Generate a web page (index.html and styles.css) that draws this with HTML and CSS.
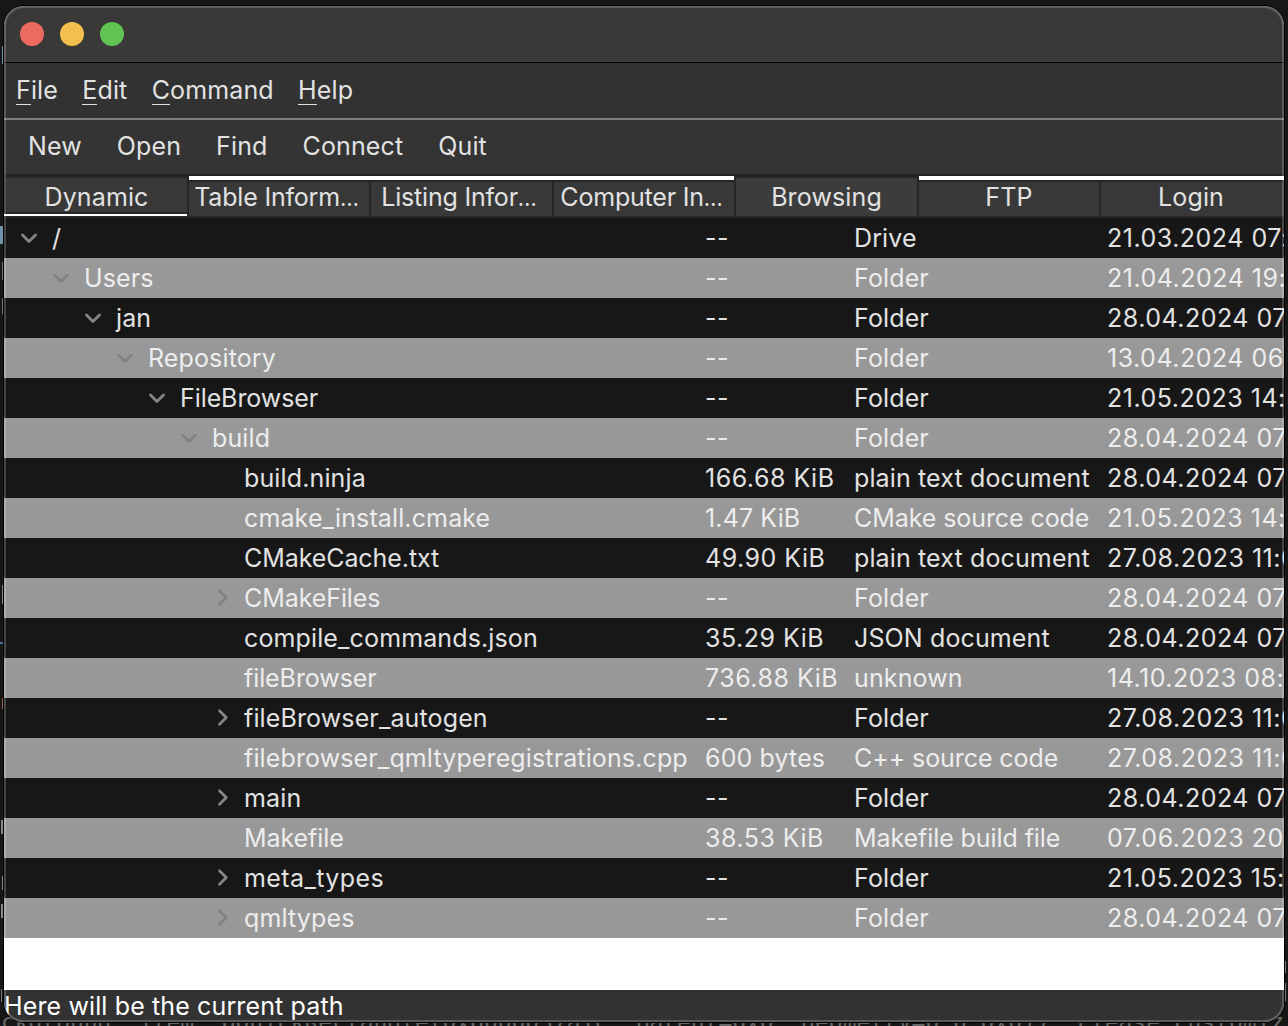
FILE: index.html
```
<!DOCTYPE html>
<html lang="en">
<head>
<meta charset="utf-8">
<title>File Browser</title>
<link rel="stylesheet" href="styles.css">
</head>
<body>
<svg class="symbols" width="0" height="0">
  <symbol id="down" viewBox="0 0 20 20"><path d="M3.5 7 10 13.4 16.5 7"/></symbol>
  <symbol id="right" viewBox="0 0 20 20"><path d="M8.5 2.8 15.3 9.5 8.5 16.2"/></symbol>
</svg>
<pre class="terminal">ckground' item: QQuickRectangle(0x6000037a1c, parent=0x0, geometry=0,0 0x0)). Please customiz</pre>
<main class="window">
  <header class="titlebar"><i class="light close"></i><i class="light minimize"></i><i class="light maximize"></i></header>
  <nav class="menubar"><span><u>F</u>ile</span><span><u>E</u>dit</span><span><u>C</u>ommand</span><span><u>H</u>elp</span></nav>
  <nav class="toolbar"><span>New</span><span>Open</span><span>Find</span><span>Connect</span><span>Quit</span></nav>
  <div class="tabs">
    <div class="tab current">Dynamic</div>
    <div class="tab lined elided">Table Inform<small>…</small></div>
    <div class="tab lined elided">Listing Infor<small>…</small></div>
    <div class="tab lined elided">Computer In<small>…</small></div>
    <div class="tab open">Browsing</div>
    <div class="tab lined">FTP</div>
    <div class="tab lined last">Login</div>
  </div>
  <section class="tree">
    <div class="row"><div class="name d0"><svg><use href="#down"/></svg>/</div><div class="num">--</div><div>Drive</div><div class="num">21.03.2024 07:12</div></div>
    <div class="row"><div class="name d1"><svg><use href="#down"/></svg>Users</div><div class="num">--</div><div>Folder</div><div class="num">21.04.2024 19:12</div></div>
    <div class="row"><div class="name d2"><svg><use href="#down"/></svg>jan</div><div class="num">--</div><div>Folder</div><div class="num">28.04.2024 07:12</div></div>
    <div class="row"><div class="name d3"><svg><use href="#down"/></svg>Repository</div><div class="num">--</div><div>Folder</div><div class="num">13.04.2024 06:12</div></div>
    <div class="row"><div class="name d4 tight"><svg><use href="#down"/></svg>FileBrowser</div><div class="num">--</div><div>Folder</div><div class="num">21.05.2023 14:12</div></div>
    <div class="row"><div class="name d5"><svg><use href="#down"/></svg>build</div><div class="num">--</div><div>Folder</div><div class="num">28.04.2024 07:12</div></div>
    <div class="row"><div class="name d6"><svg></svg>build.ninja</div><div class="num">166.68 KiB</div><div>plain text document</div><div class="num">28.04.2024 07:12</div></div>
    <div class="row"><div class="name d6"><svg></svg>cmake_install.cmake</div><div>1.47 KiB</div><div class="tight">CMake source code</div><div class="num">21.05.2023 14:12</div></div>
    <div class="row"><div class="name d6 tight"><svg></svg>CMakeCache.txt</div><div class="num">49.90 KiB</div><div>plain text document</div><div class="num">27.08.2023 11:02</div></div>
    <div class="row"><div class="name d6 tight"><svg><use href="#right"/></svg>CMakeFiles</div><div class="num">--</div><div>Folder</div><div class="num">28.04.2024 07:12</div></div>
    <div class="row"><div class="name d6"><svg></svg>compile_commands.json</div><div class="num">35.29 KiB</div><div>JSON document</div><div class="num">28.04.2024 07:12</div></div>
    <div class="row"><div class="name d6 tight"><svg></svg>fileBrowser</div><div class="num">736.88 KiB</div><div>unknown</div><div class="num">14.10.2023 08:12</div></div>
    <div class="row"><div class="name d6"><svg><use href="#right"/></svg>fileBrowser_autogen</div><div class="num">--</div><div>Folder</div><div class="num">27.08.2023 11:02</div></div>
    <div class="row"><div class="name d6"><svg></svg>filebrowser_qmltyperegistrations.cpp</div><div>600 bytes</div><div class="tight">C++ source code</div><div class="num">27.08.2023 11:02</div></div>
    <div class="row"><div class="name d6"><svg><use href="#right"/></svg>main</div><div class="num">--</div><div>Folder</div><div class="num">28.04.2024 07:12</div></div>
    <div class="row"><div class="name d6 tight"><svg></svg>Makefile</div><div class="num">38.53 KiB</div><div class="tight">Makefile build file</div><div class="num">07.06.2023 20:12</div></div>
    <div class="row"><div class="name d6 loose"><svg><use href="#right"/></svg>meta_types</div><div class="num">--</div><div>Folder</div><div class="num">21.05.2023 15:12</div></div>
    <div class="row"><div class="name d6"><svg><use href="#right"/></svg>qmltypes</div><div class="num">--</div><div>Folder</div><div class="num">28.04.2024 07:12</div></div>
  </section>
  <footer class="status">Here will be the current path</footer>
</main>
</body>
</html>
```
FILE: styles.css
```
* { box-sizing: border-box; }
body {
  margin: 0;
  height: 1026px;
  padding: 6px 4px 4px;
  overflow: hidden;
  /* slivers of the editor behind the window */
  background:
    linear-gradient(#6f93ab, #6f93ab) 2px 46px / 1px 18px no-repeat,
    linear-gradient(#6f93ab, #6f93ab) 0 226px / 3px 18px no-repeat,
    linear-gradient(#777, #777) 2px 262px / 1px 18px no-repeat,
    linear-gradient(#777, #777) 2px 298px / 1px 16px no-repeat,
    linear-gradient(#888, #888) 2px 585px / 1px 19px no-repeat,
    linear-gradient(#4a72a4, #4a72a4) 0 642px / 3px 2px no-repeat,
    linear-gradient(#9a6450, #9a6450) 2px 698px / 1px 11px no-repeat,
    linear-gradient(#888, #888) 1px 820px / 2px 14px no-repeat,
    linear-gradient(#888, #888) 2px 876px / 1px 14px no-repeat,
    linear-gradient(#888, #888) 1px 904px / 2px 14px no-repeat,
    linear-gradient(#777, #777) 1px 989px / 1px 13px no-repeat,
    linear-gradient(#777, #777) 1285px 961px / 1px 12px no-repeat,
    linear-gradient(#777, #777) 1285px 983px / 1px 18px no-repeat,
    #171717;
  color: #e2e2e2;
  font: 400 25px/40px Inter, "Liberation Sans", sans-serif;
  letter-spacing: 0.13px;
  white-space: nowrap;
}
.symbols { position: absolute; }
.terminal {
  position: absolute;
  left: 1px;
  top: 1008px;
  margin: 0;
  color: #686868;
  font: 23px/28px "DejaVu Sans Mono", monospace;
  letter-spacing: -0.05px;
}
.window {
  position: relative;
  display: flex;
  flex-direction: column;
  height: 1016px;
  overflow: hidden;
  border-radius: 20px;
  background: #fff;
  box-shadow: 0 0 0 1px #000;
}
/* hairline rim drawn over the window contents */
.window::after {
  content: "";
  position: absolute;
  inset: 0;
  border: 2px solid rgba(255, 255, 255, 0.2);
  border-radius: 20px;
  pointer-events: none;
}
.titlebar {
  display: flex;
  flex: none;
  gap: 16px;
  height: 56px;
  padding: 16px;
  background: #393937;
}
.light { width: 24px; height: 24px; border-radius: 50%; }
.close { background: #ed6a5e; }
.minimize { background: #f5bf4f; }
.maximize { background: #61c554; }
.menubar {
  display: flex;
  flex: none;
  gap: 24.3px;
  height: 58px;
  padding: 7px 12px;
  background: #323232;
  border-top: 1px solid #000;
  border-bottom: 2px solid #7d7d7d;
}
.menubar u { text-decoration: none; display: inline-block; height: 35px; border-bottom: 1px solid #e2e2e2; }
.toolbar {
  display: flex;
  flex: none;
  gap: 35px;
  height: 54px;
  padding: 6px 24px;
  background: #343434;
}
.tabs {
  display: grid;
  flex: none;
  grid-template-columns: 181px 180px 181px 180px 181px 180px 183px;
  grid-template-rows: 44px;
  column-gap: 2px;
  height: 44px;
  padding-left: 2px;
  background: #262626;
}
.tab {
  position: relative;
  margin: 4px 0 2px;
  background: #383838;
  text-align: center;
  line-height: 38px;
}
.current { margin-bottom: 6px; }
.current::after {
  content: "";
  position: absolute;
  left: -2px;
  right: 0;
  bottom: -4px;
  height: 2px;
  background: #fff;
}
.open { background: #3c3c3c; }
.lined { margin-top: 8px; line-height: 30px; }
.lined::before {
  content: "";
  position: absolute;
  left: 0;
  right: 0;
  top: -6px;
  height: 4px;
  background: #fff;
}
.lined + .lined::before { left: -2px; }
.elided { padding-right: 5px; letter-spacing: -0.2px; }
.elided small { font-size: 22px; }
.last { padding-right: 3px; }
.tree { height: 772px; flex: none; }
.row {
  display: grid;
  grid-template-columns: 701px 149px 253px 1fr;
  height: 40px;
  overflow: hidden;
  background: #171717;
  line-height: 41px;
}
.row:nth-child(even) { background: #989898; color: #ededed; }
.num { letter-spacing: 0.5px; }
.tight { letter-spacing: -0.08px; }
.loose { letter-spacing: 0.4px; }
.name { display: flex; }
.name svg {
  flex: none;
  width: 20px;
  height: 20px;
  margin: 10px 13px 0 15px;
  fill: none;
  stroke: #858585;
  stroke-width: 2.8;
  stroke-linecap: round;
  stroke-linejoin: round;
}
.row:nth-child(even) svg { stroke: #828282; }
.d1 { padding-left: 32px; }
.d2 { padding-left: 64px; }
.d3 { padding-left: 96px; }
.d4 { padding-left: 128px; }
.d5 { padding-left: 160px; }
.d6 { padding-left: 192px; }
.status { flex: 1; background: #323232; color: #fff; line-height: 33px; }
```
